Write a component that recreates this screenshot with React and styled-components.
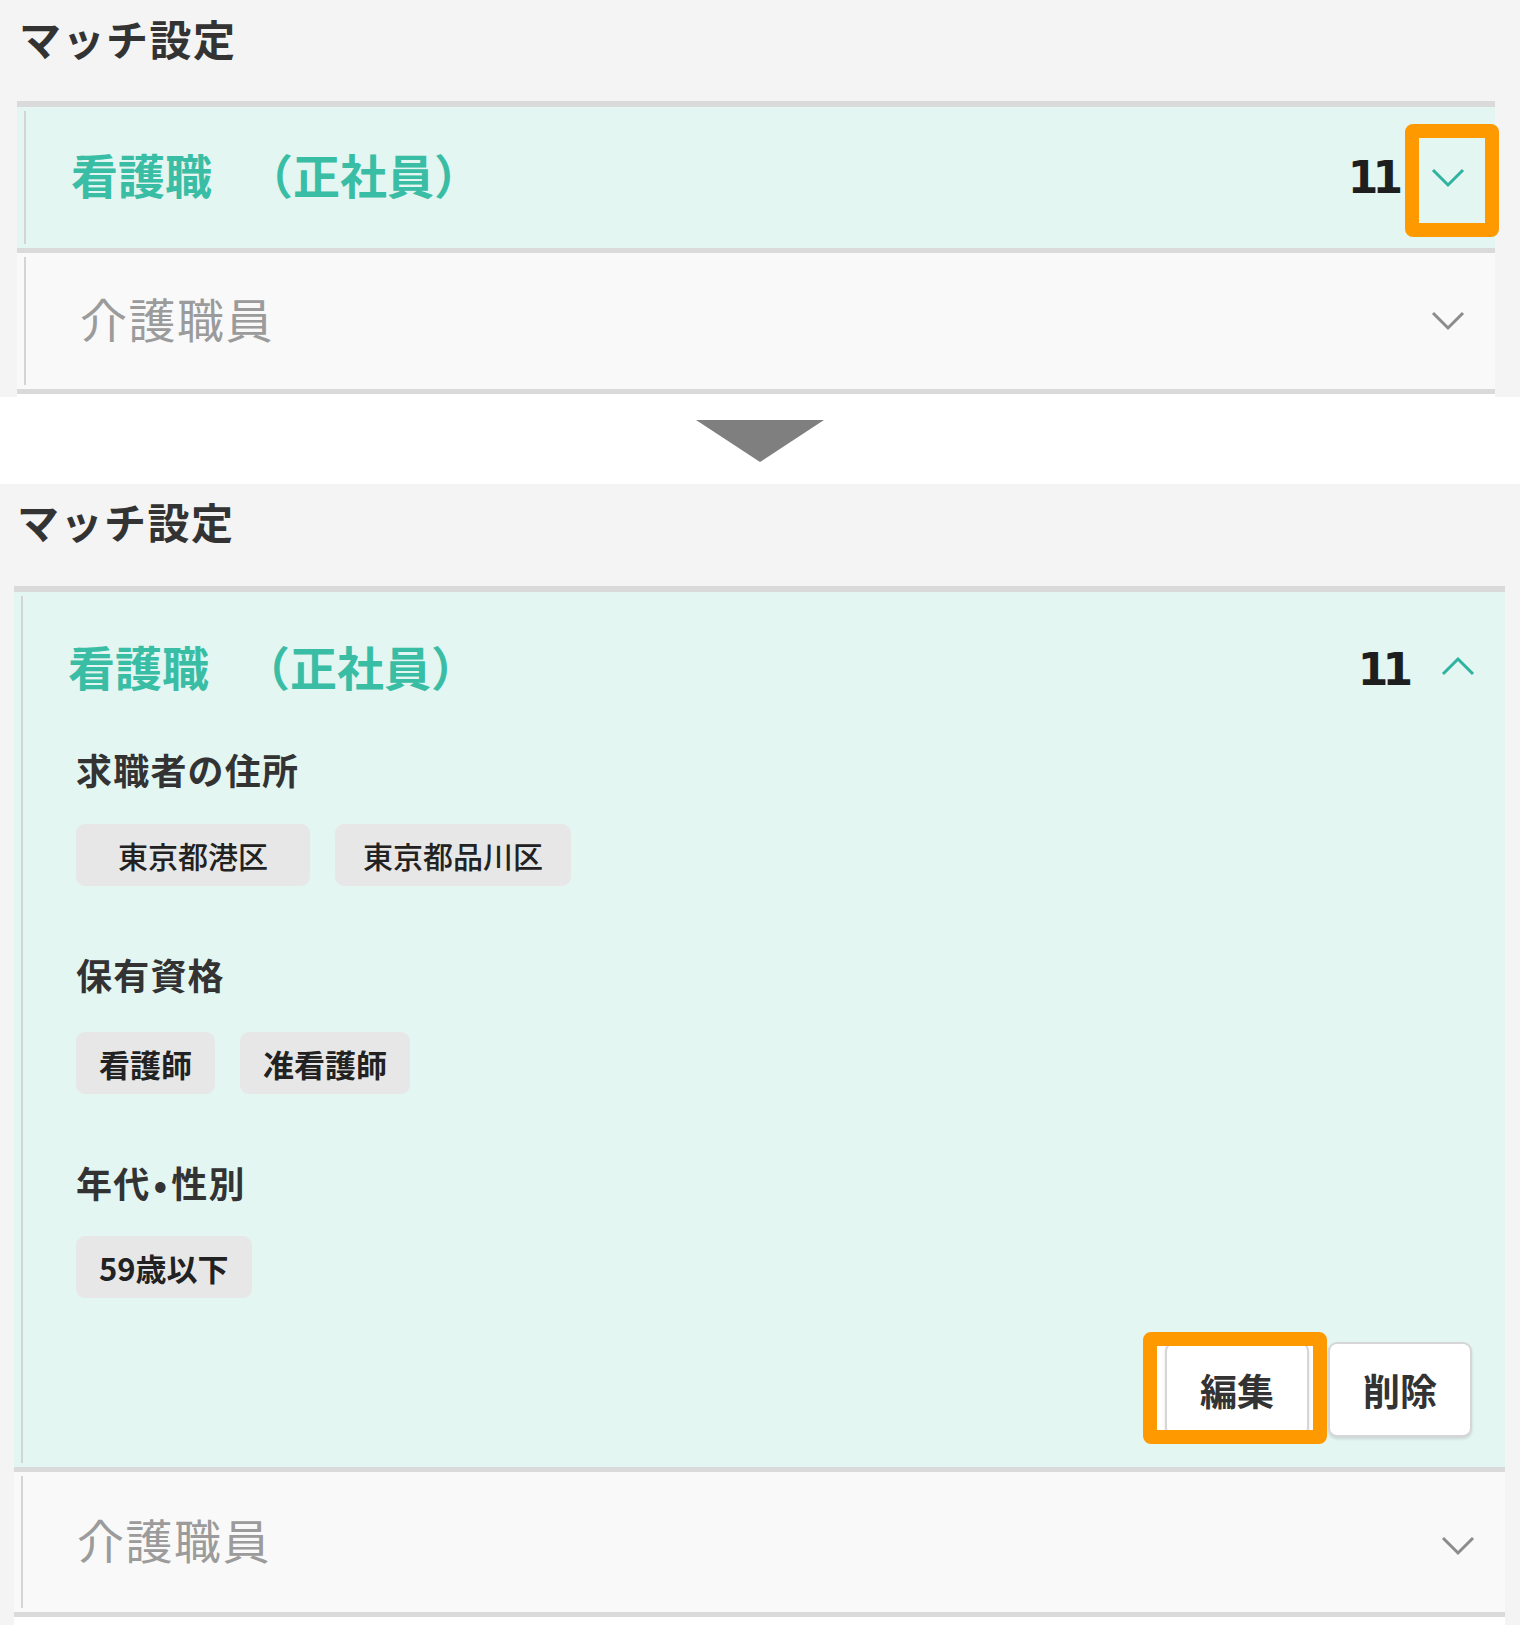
import styled, { createGlobalStyle } from 'styled-components';

const GlobalStyle = createGlobalStyle`
  html, body {
    margin: 0;
    padding: 0;
    background: #fff;
  }
  body {
    font-family: "Noto Sans CJK JP", "Noto Sans", sans-serif;
    color: #333;
    text-spacing-trim: space-all;
  }
`;

const Page = styled.div`
  width: 1520px;
  display: flex;
  flex-direction: column;
`;

const Panel = styled.section`
  background: #f4f4f4;
  padding: ${p => p.$pad};
`;

const Heading = styled.h2`
  margin: 0 0 ${p => p.$gap}px ${p => p.$indent}px;
  font-size: 42px;
  line-height: 42px;
  font-weight: 700;
  letter-spacing: 1.5px;
  color: #333;
`;

const Card = styled.div`
  border-top: 6px solid #dadada;
  display: flex;
  flex-direction: column;
`;

const Peek = styled.div`
  height: ${p => p.$h}px;
  background: #fff;
`;

const Row = styled.div`
  background: ${p => (p.$open ? '#e4f6f2' : '#f9f9f9')};
  border-bottom: 5px solid #dadada;
  padding: 4px 0 4px 7px;
`;

const RowInner = styled.div`
  border-left: 2px solid #d4d4d4;
  padding: ${p => (p.$open ? '46px 30px 26px 45px' : '0 30px 0 45px')};
`;

const Header = styled.div`
  display: flex;
  align-items: center;
  height: ${p => (p.$h ? `${p.$h}px` : 'auto')};
`;

const RowTitle = styled.div`
  flex: 1;
  font-size: 47px;
  line-height: 47px;
  font-weight: ${p => (p.$active ? 700 : 400)};
  letter-spacing: ${p => (p.$active ? 0 : 1.5)}px;
  color: ${p => (p.$active ? '#3abda5' : '#9b9b9b')};
  margin-left: ${p => (p.$active ? 0 : 9)}px;
  margin-bottom: 8px;
  white-space: nowrap;
`;

const Kind = styled.span`
  margin-left: 34px;
`;

const Count = styled.span`
  font-family: "DejaVu Sans", sans-serif;
  font-weight: 700;
  font-size: 44px;
  line-height: 46px;
  letter-spacing: -6px;
  color: #1e1e1e;
  margin-right: 34px;
`;

const IconBox = styled.span`
  position: relative;
  display: flex;
  width: 34px;
  height: 22px;
  margin-top: ${p => p.$drop || 0}px;
  svg {
    overflow: visible;
  }
`;

const Highlight = styled.span`
  position: absolute;
  inset: ${p => p.$inset};
  border: 14px solid #ff9900;
  border-radius: 8px;
  pointer-events: none;
`;

const Body = styled.div`
  margin-left: 8px;
  display: flex;
  flex-direction: column;
`;

const Group = styled.div`
  margin-top: ${p => p.$top}px;
`;

const Label = styled.div`
  font-size: 36px;
  line-height: 36px;
  font-weight: 700;
  letter-spacing: 1.2px;
  color: #333;
  margin-bottom: ${p => p.$gap}px;
`;

const Dot = styled.span`
  margin: 0 3px;
`;

const Chips = styled.div`
  display: flex;
  gap: 25px;
`;

const Chip = styled.span`
  display: inline-flex;
  align-items: center;
  justify-content: center;
  box-sizing: border-box;
  height: 62px;
  min-width: ${p => p.$minWidth || 0}px;
  padding: 0 ${p => p.$pad}px;
  background: #e7e7e7;
  border-radius: 9px;
  font-size: ${p => (p.$bold ? 31 : 30)}px;
  font-weight: ${p => (p.$bold ? 700 : 500)};
  color: #222;
`;

const Actions = styled.div`
  display: flex;
  justify-content: flex-end;
  gap: 19px;
  margin-top: 44px;
  padding-right: 3px;
`;

const Marked = styled.div`
  position: relative;
  &::before {
    content: '';
    position: absolute;
    inset: -3px -4px -3px -8px;
    background: #fff;
    border-radius: 4px;
  }
  & > button {
    position: relative;
  }
`;

const Button = styled.button`
  width: 144px;
  height: 95px;
  box-sizing: border-box;
  background: #fff;
  border: 2px solid #d6d6d6;
  border-radius: 9px;
  box-shadow: 0 2px 3px rgba(0, 0, 0, 0.12);
  font-family: "Noto Sans CJK JP", sans-serif;
  font-size: 37px;
  font-weight: 700;
  color: #333;
  padding: 0;
`;

const ArrowStrip = styled.div`
  height: 87px;
  background: #fff;
  display: flex;
  justify-content: center;
  padding-top: 23px;
  box-sizing: border-box;
`;

const Triangle = styled.div`
  width: 0;
  height: 0;
  border-left: 64px solid transparent;
  border-right: 64px solid transparent;
  border-top: 42px solid #7f7f7f;
`;

function Chevron({ up, color }) {
  return (
    <svg width="34" height="22" viewBox="0 0 34 22">
      <polyline
        points={up ? '2,15 17,0 32,15' : '2,3 17,18 32,3'}
        fill="none"
        stroke={color}
        strokeWidth="3"
      />
    </svg>
  );
}

function CollapsedRow({ title, h, drop }) {
  return (
    <Row>
      <RowInner>
        <Header $h={h}>
          <RowTitle>{title}</RowTitle>
          <IconBox $drop={drop}>
            <Chevron color="#8c8c8c" />
          </IconBox>
        </Header>
      </RowInner>
    </Row>
  );
}

function JobTitle() {
  return (
    <RowTitle $active>
      看護職<Kind>（正社員）</Kind>
    </RowTitle>
  );
}

export default function App() {
  return (
    <>
      <GlobalStyle />
      <Page>
        <Panel $pad="17px 25px 0 17px">
          <Heading $gap={42} $indent={2}>マッチ設定</Heading>
          <Card>
            <Row $open>
              <RowInner>
                <Header $h={133}>
                  <JobTitle />
                  <Count>11</Count>
                  <IconBox>
                    <Chevron color="#2eb3a0" />
                    <Highlight $inset="-43px -34px -48px -26px" />
                  </IconBox>
                </Header>
              </RowInner>
            </Row>
            <CollapsedRow title="介護職員" h={128} />
            <Peek $h={3} />
          </Card>
        </Panel>

        <ArrowStrip>
          <Triangle />
        </ArrowStrip>

        <Panel $pad="16px 15px 0 14px">
          <Heading $gap={44} $indent={3}>マッチ設定</Heading>
          <Card>
            <Row $open>
              <RowInner $open>
                <Header>
                  <JobTitle />
                  <Count>11</Count>
                  <IconBox>
                    <Chevron up color="#2eb3a0" />
                  </IconBox>
                </Header>
                <Body>
                  <Group $top={54}>
                    <Label $gap={37}>求職者の住所</Label>
                    <Chips>
                      <Chip $pad={28} $minWidth={234}>東京都港区</Chip>
                      <Chip $pad={28}>東京都品川区</Chip>
                    </Chips>
                  </Group>
                  <Group $top={70}>
                    <Label $gap={40}>保有資格</Label>
                    <Chips>
                      <Chip $pad={23} $bold>看護師</Chip>
                      <Chip $pad={23} $bold>准看護師</Chip>
                    </Chips>
                  </Group>
                  <Group $top={70}>
                    <Label $gap={36}>
                      年代<Dot>•</Dot>性別
                    </Label>
                    <Chips>
                      <Chip $pad={23} $bold>59歳以下</Chip>
                    </Chips>
                  </Group>
                  <Actions>
                    <Marked>
                      <Button>編集</Button>
                      <Highlight $inset="-10px -18px -7px -22px" />
                    </Marked>
                    <Button>削除</Button>
                  </Actions>
                </Body>
              </RowInner>
            </Row>
            <CollapsedRow title="介護職員" h={132} drop={8} />
            <Peek $h={20} />
          </Card>
        </Panel>
      </Page>
    </>
  );
}
